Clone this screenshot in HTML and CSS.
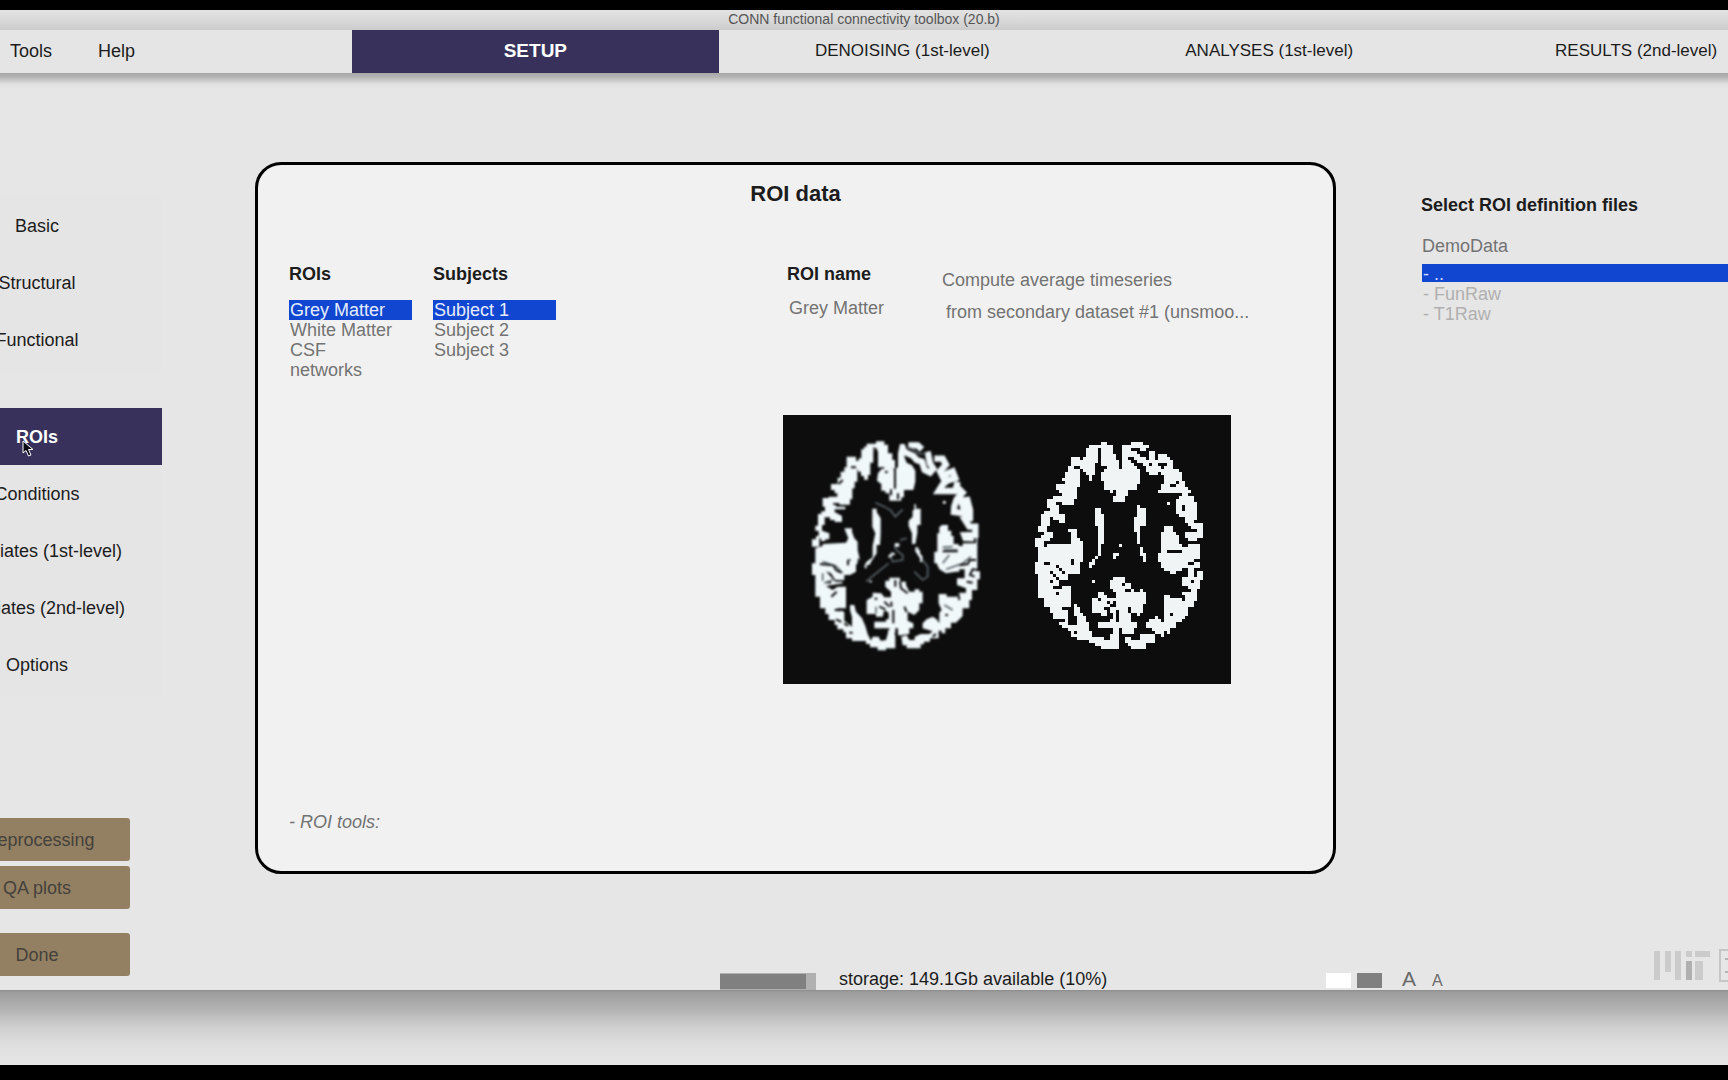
FILE: index.html
```html
<!DOCTYPE html>
<html lang="en">
<head>
<meta charset="utf-8">
<title>CONN functional connectivity toolbox (20.b)</title>
<link rel="stylesheet" href="styles.css">
</head>
<body>
<div class="window">
  <header class="titlebar">CONN functional connectivity toolbox (20.b)</header>
  <nav class="topnav">
    <div class="menus">
      <button class="menu" type="button">Tools</button>
      <button class="menu" type="button">Help</button>
    </div>
    <a class="tab tab-active" href="#setup">SETUP</a>
    <a class="tab" href="#denoising">DENOISING (1st-level)</a>
    <a class="tab" href="#analyses">ANALYSES (1st-level)</a>
    <a class="tab" href="#results">RESULTS (2nd-level)</a>
  </nav>
  <div class="workspace">
    <aside class="sidebar">
      <nav class="steps">
        <a class="step" href="#basic">Basic</a>
        <a class="step" href="#structural">Structural</a>
        <a class="step" href="#functional">Functional</a>
      </nav>
      <nav class="steps">
        <a class="step step-active" href="#rois">ROIs
          <svg class="cursor" width="12" height="17" viewBox="0 0 12 17"><path d="M1 1V13L4 10.500L6.500 16L9 15L6.500 9.500H11Z" fill="#0a0a14" stroke="#fff" stroke-width="1"/></svg>
        </a>
        <a class="step" href="#conditions">Conditions</a>
        <a class="step" href="#cov1">Covariates (1st-level)</a>
        <a class="step" href="#cov2">Covariates (2nd-level)</a>
        <a class="step" href="#options">Options</a>
      </nav>
      <div class="actions">
        <button class="action" type="button">Preprocessing</button>
        <button class="action" type="button">QA plots</button>
        <button class="action action-done" type="button">Done</button>
      </div>
    </aside>

    <main class="panel">
      <h1 class="panel-title">ROI data</h1>
      <div class="columns">
        <section>
          <h2 class="heading" id="rois-h">ROIs</h2>
          <ul class="list" role="listbox" aria-labelledby="rois-h">
            <li class="option option-selected" role="option" aria-selected="true">Grey Matter</li>
            <li class="option" role="option">White Matter</li>
            <li class="option" role="option">CSF</li>
            <li class="option" role="option">networks</li>
          </ul>
        </section>
        <section>
          <h2 class="heading" id="subjects-h">Subjects</h2>
          <ul class="list" role="listbox" aria-labelledby="subjects-h">
            <li class="option option-selected" role="option" aria-selected="true">Subject 1</li>
            <li class="option" role="option">Subject 2</li>
            <li class="option" role="option">Subject 3</li>
          </ul>
        </section>
        <section class="details">
          <div class="fields">
            <div class="name-field">
              <label class="heading" for="roi-name">ROI name</label>
              <input class="name-input" id="roi-name" type="text" value="Grey Matter">
            </div>
            <div class="compute">
              <select class="pick" aria-label="Measure"><option>Compute average timeseries</option></select>
              <select class="pick pick-source" aria-label="Source dataset"><option>from secondary dataset #1 (unsmoo...</option></select>
            </div>
          </div>
          <svg class="slices" viewBox="0 0 448 269" role="img" aria-label="Grey matter probability map and mask">
            <defs>
              <filter id="voxels" x="0" y="0" width="448" height="269" filterUnits="userSpaceOnUse" color-interpolation-filters="sRGB">
                <feComponentTransfer in="SourceGraphic" result="hard">
                  <feFuncA type="discrete" tableValues="0 1"/>
                </feComponentTransfer>
                <feFlood x="1" y="1" width="1" height="1" flood-color="#000"/>
                <feComposite width="3" height="3"/>
                <feTile result="grid"/>
                <feComposite in="hard" in2="grid" operator="in"/>
                <feMorphology operator="dilate" radius="1"/>
                <feComponentTransfer>
                  <feFuncR type="discrete" tableValues="0 0.945"/>
                  <feFuncG type="discrete" tableValues="0 0.96"/>
                  <feFuncB type="discrete" tableValues="0 0.96"/>
                </feComponentTransfer>
              </filter>
              <filter id="soft" x="0" y="0" width="448" height="269" filterUnits="userSpaceOnUse" color-interpolation-filters="sRGB">
                <feGaussianBlur stdDeviation="0.900"/>
              </filter>
              <mask id="cortex" maskUnits="userSpaceOnUse" x="0" y="0" width="720" height="840">
                <g fill="#fff">
                  <path d="M256 118H264V110H272V101H300V94H325V104H336V130H349V150H357V176H325V172H306V122H296V112H292V158H283V195H276V209H264V198H255V185H246V178H244V215H236V235H229V268H222V284H180V290H208V298H176V306L198 318V336H176V330H162V322H146V345H138V362L160 370V388H148V393H135V385H130V410H108V388H120V378H128V362H118V347H126V312H136V304H147V290H140V264H158V260H184V250H176V240H165V222H185V203H194V185H205V172H212V140H240V152H248V145H256Z"/>
                  <path d="M306 190L316 178L340 172L357 180L366 170V130L372 102H386L392 118L385 140L392 158L408 166L418 182V215L412 240H384V262H376V272H340V250H328V242H316V222L303 212Z"/>
                  <path d="M205 355H228V365L235 385L245 395V420L252 450L240 465V485L222 495H205V510H178L165 490L150 484L178 515H200V520L150 528L170 540L185 530H210V595H180L205 606V632L228 650V622L222 600V585H235L240 605L258 625L268 648L275 672L285 692L290 680H308L314 692L330 690L340 655L352 650L358 680V715H330V721H305V712H282V702H270V693H228V685H210V667H202V658H184V645H176V630H158V612H148V595H132V560H118V495H108V460H118V415L140 408V402L210 398L217 385Z"/>
                  <path d="M340 503H372V515H390V525L400 545H416V538H430V545H440V580H430V600L415 615L395 605V632L412 640V655H400V672L375 676H366V655H358V668H336V660H310V655H295V635H330V628H338V608L325 600L320 620H300V612H272V570L290 560V548L316 550L325 562L345 562V545L328 530V512H340Z"/>
                  <path d="M498 345H516V362H526V378H533V402H548V408H560V400H600V378H604V484H612V508H604V540H588V570H580V595H560V618L540 638H525V655H508V670H497V662H488V685H462V695H444V703H434V715H392V706H380L376 680L392 676L400 690H416V680L434 672H460L470 664L440 655V640L452 628L470 620L482 628L490 640V608L497 600L488 580V552H512V560H545V548H570V535L543 525V505H566V478H550V485H540L510 490L490 478L482 460H475V425H484V370H490V352Z"/>
                  <path d="M289 296H302V306L314 325V372L312 405H302V430L290 448L280 465H272V475H266V465L272 455L290 442V408L298 370L289 350Z"/>
                  <path d="M415 283H420V296H434V345H424V368L418 402H408V370L398 348V332L410 320V300H415ZM418 412H427V420H432V430L440 440V456H432V445L418 424ZM356 400H370V410H356ZM344 428H356V436H348V443H338V434H344ZM280 512H288V517H280ZM501 273H509V281H501Z"/>
                </g>
                <g fill="none" stroke="#fff" stroke-width="19">
                  <path d="M397 106H425L438 118"/>
                  <path d="M382 124L412 138L422 150L438 155L446 180L462 188L472 176L462 160L455 125"/>
                  <path d="M475 146H500L510 164L492 184L500 200L514 190L530 184L538 204L514 212L500 224L488 243L538 243L545 215"/>
                  <path d="M540 228L560 248L542 268L535 290L534 306L564 310L562 292L555 272L574 270L582 300L582 325L566 328L580 350L598 350V375L565 376L568 384L594 385"/>
                </g>
                <g fill="none" stroke="#000" stroke-width="6">
                  <path d="M357 176V236M327 186H335M345 238V256M366 250V268M300 115V155M240 172H225M188 222L200 210M172 282H190"/>
                  <path d="M132 462L172 466L180 480L195 488M216 450V466M500 424H545M150 516L165 518M176 600L195 601"/>
                  <path d="M372 515L375 535L395 550M358 510V530M325 575L340 590M296 566H304M310 590L328 598M385 590L392 606M346 575V590M330 610L336 622M352 600V640M310 658L340 658"/>
                  <path d="M600 450L582 450L575 462L550 466M606 480L590 478L582 495L596 500M572 515L590 518M546 545L550 570M508 615H516M470 680L480 672M205 640L216 648M166 560L182 545M220 668H230M180 628L196 636M248 446V462"/>
                </g>
              </mask>
            </defs>
            <rect width="448" height="269" fill="#0d0d0d"/>
            <g filter="url(#soft)">
              <g transform="translate(-7 -5) scale(.3333)">
                <rect width="720" height="840" fill="#f1f8fa" mask="url(#cortex)"/>
                <g fill="none" stroke="#596266" stroke-width="5">
                  <path d="M298 278L325 290L345 302L358 320L380 298"/>
                  <path d="M270 515L300 490L338 460M415 485L440 510L455 500V470L438 448"/>
                  <path d="M345 440L350 455L380 450V435L366 425L355 410M372 390L392 385"/>
                  <path d="M400 112L430 132L450 130M500 412L530 410M520 435L500 460M505 585L530 600M145 520L170 510"/>
                </g>
                <g fill="none" stroke="#39434a" stroke-width="4">
                  <path d="M215 450H225M140 455L180 468L200 490M510 478L560 460L585 440M505 420H545M300 590V610M140 490V512"/>
                </g>
              </g>
            </g>
            <g filter="url(#voxels)">
              <g transform="translate(217 -5) scale(.3333)">
                <rect width="720" height="840" fill="#f1f5f5" mask="url(#cortex)"/>
              </g>
            </g>
          </svg>
        </section>
      </div>
      <select class="pick pick-tools" aria-label="ROI tools"><option>- ROI tools:</option></select>
    </main>

    <section class="files">
      <h2 class="heading">Select ROI definition files</h2>
      <p class="folder">DemoData</p>
      <ul class="file-list" role="listbox" aria-label="Folder contents">
        <li class="file file-selected" role="option" aria-selected="true">- ..</li>
        <li class="file" role="option">- FunRaw</li>
        <li class="file" role="option">- T1Raw</li>
      </ul>
    </section>

    <footer class="status">
      <div class="meter"><div class="meter-fill" style="width:90%"></div></div>
      <span class="storage">storage: 149.1Gb available (10%)</span>
      <div class="swatches">
        <button class="swatch" type="button" aria-label="Light theme"></button>
        <button class="swatch swatch-dark" type="button" aria-label="Dark theme"></button>
      </div>
      <div class="sizes">
        <button class="size size-up" type="button">A</button>
        <button class="size" type="button">A</button>
      </div>
      <svg class="logo" width="88" height="34" viewBox="0 0 88 34" aria-label="MIT">
        <g fill="#cbcbcb">
          <path d="M0 2H6V31H0ZM11 2H17V23H11ZM21 2H27V31H21ZM32 2H38V8H32ZM41 2H56V8H41ZM41 12H49V31H41Z"/>
          <path d="M32 12H38V31H32Z" fill="#b0b0b0"/>
        </g>
        <rect x="66" y="1" width="30" height="31" fill="none" stroke="#c6c6c6" stroke-width="2"/>
        <path d="M71 9H80V11H77V22H80V24H71V22H74V11H71Z" fill="#b4b4b4"/>
      </svg>
    </footer>
  </div>
</div>
<div class="desktop"></div>
</body>
</html>
```
FILE: styles.css
```css
* { box-sizing: border-box; }

body {
  margin: 0;
  min-height: 100vh;
  padding: 10px 0 15px;
  display: flex;
  flex-direction: column;
  overflow-x: hidden;
  background: #000;
  color: #1c1c1c;
  font: 18px/20px "Liberation Sans", Arial, sans-serif;
}

h1, h2, p, ul { margin: 0; padding: 0; }
ul { list-style: none; }
a { color: inherit; text-decoration: none; }
button, input, select {
  margin: 0;
  padding: 0;
  border: 0;
  border-radius: 0;
  background: none;
  color: inherit;
  font: inherit;
  appearance: none;
}

.window {
  flex: 1;
  display: flex;
  flex-direction: column;
  overflow: hidden;
  background: #e6e6e6;
}

.titlebar {
  height: 20px;
  background: linear-gradient(#e2e2e2, #d6d7d6 60%, #cbcbcb);
  color: #555;
  font-size: 14px;
  line-height: 18px;
  text-align: center;
}

.topnav {
  display: grid;
  grid-template-columns: 352fr repeat(4, 367fr);
  width: 105.3%;
  height: 43px;
  padding-bottom: 2px;
  background: #e5e5e5;
  font-size: 17px;
}
.menus { display: flex; gap: 46px; padding-left: 10px; font-size: 18px; }
.tab { display: flex; align-items: center; justify-content: center; white-space: nowrap; }
.tab-active { margin-bottom: -2px; padding-bottom: 2px; background: #37315b; color: #fff; font-weight: bold; font-size: 19px; }

.workspace {
  flex: 1;
  display: grid;
  grid-template-columns: 170px minmax(0, 1081fr) minmax(0, 307fr);
  grid-template-rows: 1fr 41px;
  column-gap: 85px;
  background: linear-gradient(#a8a8a8, #b4b4b4 4px, #e0e0e0 11px, #e6e6e6 16px);
}

.sidebar {
  grid-row: 1 / 3;
  width: 162px;
  padding: 124px 0 14px;
  display: flex;
  flex-direction: column;
  gap: 37px;
}
.steps { margin-left: -88px; padding-bottom: 3px; background: #e5e5e5; }
.step {
  position: relative;
  display: flex;
  height: 57px;
  align-items: center;
  justify-content: center;
  white-space: nowrap;
}
.step-active { background: #37315b; color: #fff; font-weight: bold; }
.cursor { position: absolute; left: 110px; top: 32px; }
.actions {
  margin: auto 32px 0 -56px;
  display: flex;
  flex-direction: column;
  gap: 5px;
}
.action { height: 43px; border-radius: 3px; background: #938062; color: #45413c; }
.action-done { margin-top: 19px; }

.panel {
  margin: 89px 0 75px;
  padding: 15px 31px 38px;
  display: flex;
  flex-direction: column;
  border: 3px solid #000;
  border-radius: 26px;
  background: #f1f1f1;
}
.panel-title { font-size: 22px; line-height: 28px; text-align: center; }
.columns {
  margin-top: 56px;
  display: grid;
  grid-template-columns: 144px 350px minmax(0, 1fr);
}
.heading { display: block; font-size: 18px; line-height: 20px; font-weight: bold; color: #1c1c1c; }
.list { width: 123px; margin-top: 16px; color: #737373; }
.option { padding-left: 1px; }
.option-selected { background: #1147d0; color: #e4edff; }

.fields { display: grid; grid-template-columns: 155px 1fr; padding-left: 4px; }
.name-input { width: 130px; height: 20px; margin-top: 14px; padding-left: 2px; color: #737373; }
.compute { display: flex; flex-direction: column; align-items: flex-start; gap: 10px; padding-top: 5px; }
.pick { height: 22px; color: #737373; }
.pick-source { padding-left: 4px; }
.pick-tools { margin-top: auto; align-self: flex-start; font-style: italic; }
.slices { display: block; width: 448px; height: 269px; margin-top: 92px; }

.files { padding-top: 122px; }
.folder { margin-top: 21px; padding-left: 1px; color: #737373; }
.file-list { margin: 8px 0 0 1px; color: #b0b0b0; }
.file { padding-left: 1px; }
.file-selected { height: 18px; margin-bottom: 2px; background: #1147d0; color: #cfdcff; }

.status {
  grid-column: 2 / 4;
  padding-left: 465px;
  display: grid;
  grid-template-columns: 119fr 487fr 76fr 252fr minmax(0, 74fr);
  align-items: end;
}
.meter { width: 96px; height: 18px; padding: 1px 0 2px; background: #b0b0b0; }
.meter-fill { height: 15px; background: #808080; }
.storage { white-space: nowrap; padding-bottom: 2px; }
.swatches { display: flex; gap: 6px; padding-bottom: 3px; }
.swatch { width: 25px; height: 15px; background: #fff; }
.swatch-dark { background: #808080; }
.sizes { display: flex; align-items: baseline; gap: 16px; color: #6a6a6a; }
.size { font-size: 16px; }
.size-up { font-size: 21px; }
.logo { margin-bottom: 8px; }

.desktop {
  height: 75px;
  background: linear-gradient(#8c8c8c, #9c9c9c 2px, #b4b4b4 20px, #cfcfcf 37px, #dfdfdf 55px, #e6e6e6);
}
```
